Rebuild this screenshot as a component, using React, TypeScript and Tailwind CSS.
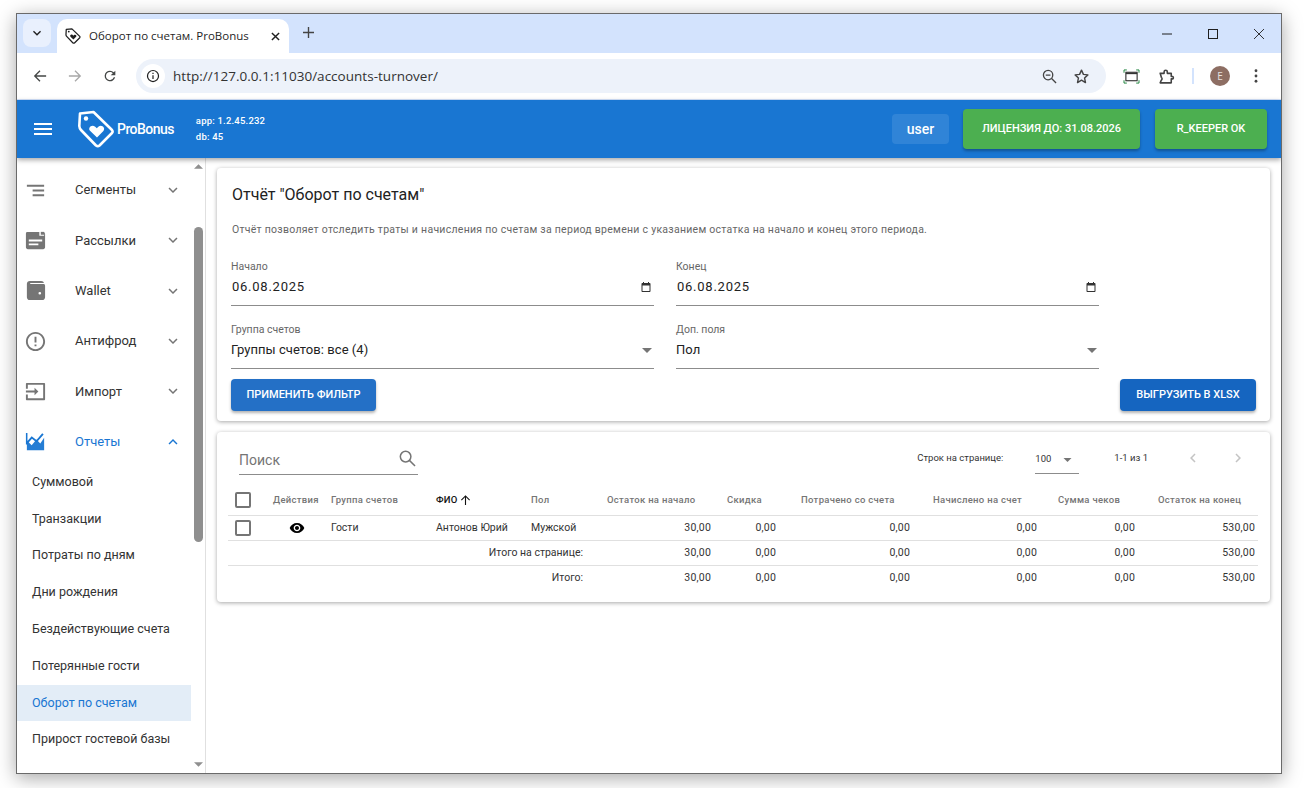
import React from "react";

const P = ({ d, className = "" }: { d: string; className?: string }) => (
  <svg viewBox="0 0 24 24" className={className} fill="currentColor"><path d={d} /></svg>
);
const MORE = "M16.59 8.59L12 13.17 7.41 8.59 6 10l6 6 6-6z";
const LESS = "M12 8l-6 6 1.41 1.41L12 10.83l4.59 4.58L18 14z";

const Tag = ({ className = "", sw = 2 }: { className?: string; sw?: number }) => (
  <svg viewBox="0 0 38 38" className={className} fill="none" stroke="currentColor" strokeWidth={sw} strokeLinejoin="round">
    <path d="M3 3.5 L16.5 2 L35 20 Q36.2 21.5 35 23 L22.5 35.5 Q20.8 36.8 19 35.5 L4 20 Q2.5 18.5 2.3 16 Z" />
    <circle cx="9" cy="8.5" r="2.2" fill="currentColor" stroke="none" />
    <path d="M20 27.5 L13 20.8 C10.5 17.8 14.8 13.6 18.2 16.8 L19.8 18.3 L21.3 16.8 C24.5 13.8 29 17.8 26.4 20.9 Z" fill="currentColor" stroke="none" />
  </svg>
);

const navTop = [
  { label: "Сегменты", icon: <P d="M9 18h12v-2H9v2zM3 6v2h18V6H3zm6 7h12v-2H9v2z" className="w-[23px] h-[23px]" /> },
  {
    label: "Рассылки",
    icon: (
      <svg viewBox="0 0 24 24" className="w-[23px] h-[23px]" fill="currentColor">
        <path fillRule="evenodd" d="M3 3h13v4h5V3.5c.6.2 1 .7 1 1.5v14c0 1.1-.9 2-2 2H4c-1.1 0-2-.9-2-2V5c0-1.1.4-2 1-2zM5 11v2h14v-2H5zm0 4v2h10v-2H5z" />
        <rect x="17.5" y="3" width="3.5" height="3" />
      </svg>
    ),
  },
  {
    label: "Wallet",
    icon: (
      <svg viewBox="0 0 24 24" className="w-[23px] h-[23px]" fill="currentColor">
        <path fillRule="evenodd" d="M6 2h12c1.5 0 2.5 1 2.8 2.2H6.5v1H21c.6.3 1 1 1 1.8v12c0 1.6-1.2 3-3 3H6c-1.8 0-3-1.4-3-3V5c0-1.7 1.3-3 3-3zm10.5 11.5a1.4 1.4 0 1 0 0 2.8 1.4 1.4 0 0 0 0-2.8z" />
      </svg>
    ),
  },
  { label: "Антифрод", icon: <P d="M11 15h2v2h-2zm0-8h2v6h-2zm.99-5C6.47 2 2 6.48 2 12s4.47 10 9.99 10C17.52 22 22 17.52 22 12S17.52 2 11.99 2zM12 20c-4.42 0-8-3.58-8-8s3.58-8 8-8 8 3.58 8 8-3.58 8-8 8z" className="w-[23px] h-[23px]" /> },
  { label: "Импорт", icon: <P d="M21 3.01H3c-.5 0-1 .4-1 1V9h2V5h16v14H4v-4H2v5c0 .6.5 1 1 1h18c.5 0 1-.4 1-1V4c0-.6-.5-1-1-1zM11 16l4-4-4-4v3H2v2h9v3z" className="w-[23px] h-[23px]" /> },
];
const sub = ["Суммовой", "Транзакции", "Потраты по дням", "Дни рождения", "Бездействующие счета", "Потерянные гости", "Оборот по счетам", "Прирост гостевой базы"];

const Check = () => <span className="block w-[16px] h-[16px] rounded-[2px] border-2 border-[#757575] bg-white" />;

const cols = [34, 69, 105, 95, 65, 118, 65, 134, 127, 98, 120];
const heads: [string, number][] = [
  ["Остаток на начало", 11],
  ["Скидка", 13],
  ["Потрачено со счета", 22],
  ["Начислено на счет", 20],
  ["Сумма чеков", 18],
  ["Остаток на конец", 20],
];
const Nums = ({ first }: { first: string }) => (
  <>
    {[first, "0,00", "0,00", "0,00", "0,00", "530,00"].map((v, i) => (
      <td key={i} className="text-right pr-[3px] tracking-[0.2px]">{v}</td>
    ))}
  </>
);

const Field = ({ label, value, date }: { label: string; value: string; date?: boolean }) => (
  <div className="w-[423px] h-[44px] border-b border-[#8c8c8c] flex flex-col">
    <div className="text-[10.5px] leading-[13px] text-[#666] mt-[-2px]">{label}</div>
    <div className="flex items-center justify-between mt-[4px] h-[20px] text-[13px] text-[#222]">
      <span className={date ? "tracking-[0.75px] pl-[1px]" : "tracking-[0.05px]"}>{value}</span>
      {date ? (
        <P d="M19 4h-1V2h-2v2H8V2H6v2H5c-1.1 0-2 .9-2 2v14c0 1.1.9 2 2 2h14c1.1 0 2-.9 2-2V6c0-1.1-.9-2-2-2zm0 16H5V9h14v11z" className="w-[12px] h-[12px] mr-[2px] text-[#333]" />
      ) : (
        <svg viewBox="0 0 10 5" className="w-[10px] h-[5px] mr-[2px] text-[#757575]" fill="currentColor"><path d="M0 0h10L5 5z" /></svg>
      )}
    </div>
  </div>
);

export default function App() {
  return (
    <div className="w-[1305px] h-[788px] bg-white overflow-hidden pl-[16px] pt-[13px] font-['Roboto',sans-serif]">
      <div className="w-[1266px] h-[761px] border border-[#6a6a6a] shadow-[0_4px_18px_rgba(0,0,0,0.35)] bg-white flex flex-col overflow-hidden">
        {/* tab strip */}
        <div className="h-[39px] shrink-0 bg-[#d3e3fd] flex items-end font-['Open_Sans',sans-serif]">
          <div className="ml-[6px] mb-[6px] w-[28px] h-[28px] rounded-[8px] bg-[#e9f0fd] flex items-center justify-center text-[#1f1f1f]">
            <P d={MORE} className="w-[16px] h-[16px]" />
          </div>
          <div className="ml-[6px] w-[232px] h-[34px] bg-white rounded-t-[10px] flex items-center pl-[8px] pr-[9px] text-[#1f1f1f]">
            <Tag className="w-[16px] h-[16px] shrink-0" sw={3} />
            <span className="ml-[8px] text-[11.5px] leading-none flex-1 whitespace-nowrap">Оборот по счетам. ProBonus</span>
            <svg viewBox="0 0 10 10" className="w-[9px] h-[9px]" stroke="currentColor" strokeWidth="1.6"><path d="M1 1l8 8M9 1l-8 8" /></svg>
          </div>
          <svg viewBox="0 0 12 12" className="w-[11px] h-[11px] ml-[14px] mb-[15px] text-[#444]" stroke="currentColor" strokeWidth="1.5"><path d="M6 0v12M0 6h12" /></svg>
          <div className="ml-auto flex items-center mb-[14px] mr-[17px] gap-[36px] text-[#1f1f1f]">
            <svg viewBox="0 0 10 10" className="w-[10px] h-[10px]" stroke="currentColor" strokeWidth="1"><path d="M0 5h10" /></svg>
            <svg viewBox="0 0 10 10" className="w-[10px] h-[10px]" fill="none" stroke="currentColor" strokeWidth="1"><rect x=".5" y=".5" width="9" height="9" /></svg>
            <svg viewBox="0 0 10 10" className="w-[10px] h-[10px]" stroke="currentColor" strokeWidth=".9"><path d="M0 0l10 10M10 0L0 10" /></svg>
          </div>
        </div>
        {/* toolbar */}
        <div className="h-[47px] shrink-0 bg-white flex items-center border-b border-[#d3e3fd] text-[#444746] font-['Open_Sans',sans-serif]">
          <svg viewBox="0 0 16 16" className="w-[14px] h-[14px] ml-[16px]" fill="none" stroke="currentColor" strokeWidth="1.5"><path d="M15 8H2M8 2L2 8l6 6" /></svg>
          <svg viewBox="0 0 16 16" className="w-[14px] h-[14px] ml-[21px] text-[#a8a8a8]" fill="none" stroke="currentColor" strokeWidth="1.5"><path d="M1 8h13M8 2l6 6-6 6" /></svg>
          <svg viewBox="0 0 24 24" className="w-[16px] h-[16px] ml-[20px]" fill="currentColor"><path d="M17.65 6.35A7.96 7.96 0 0 0 12 4a8 8 0 1 0 7.73 10h-2.08A6 6 0 1 1 12 6c1.66 0 3.14.69 4.22 1.78L13 11h7V4l-2.35 2.35z" /></svg>
          <div className="ml-[18px] w-[970px] h-[34px] rounded-full bg-[#edf2fa] flex items-center pl-[5px] pr-[16px]">
            <span className="w-[24px] h-[24px] rounded-full bg-white flex items-center justify-center">
              <svg viewBox="0 0 16 16" className="w-[14px] h-[14px]" fill="none" stroke="#1f1f1f" strokeWidth="1.4"><circle cx="8" cy="8" r="6.3" /><path d="M8 7v4.5M8 4.2v1.6" /></svg>
            </span>
            <span className="ml-[8px] text-[13.5px] text-[#333] tracking-[0.02px] whitespace-nowrap">http://127.0.0.1:11030/accounts-turnover/</span>
            <svg viewBox="0 0 16 16" className="w-[15px] h-[15px] ml-auto" fill="none" stroke="#444" strokeWidth="1.4"><circle cx="6.5" cy="6.5" r="5" /><path d="M10.2 10.2L15 15M4 6.5h5" /></svg>
            <svg viewBox="0 0 24 24" className="w-[17px] h-[17px] ml-[16px]" fill="none" stroke="#444" strokeWidth="2" strokeLinejoin="round"><path d="M12 3l2.7 6 6.3.7-4.7 4.3 1.3 6.5-5.6-3.3-5.6 3.3L7.7 14 3 9.7 9.3 9z" /></svg>
          </div>
          <svg viewBox="0 0 18 16" className="w-[17px] h-[15px] ml-[17px]" fill="none">
            <path d="M1 4V1h3M14 1h3v3M17 12v3h-3M4 15H1v-3" stroke="#188038" strokeWidth="1" />
            <rect x="3" y="3.5" width="12" height="9" stroke="#333" strokeWidth="1.2" />
            <path d="M3 4h12v1.5H3z" fill="#333" />
          </svg>
          <svg viewBox="0 0 24 24" className="w-[19px] h-[19px] ml-[17px]" fill="none" stroke="#444" strokeWidth="2" strokeLinejoin="round"><path d="M4 8h5V6a2 2 0 0 1 4 0v2h5v4h2a2 2 0 0 1 0 3h-2v5H4l1.5-3.5a2.2 2.2 0 0 0 0-3.5L4 8z" /></svg>
          <span className="w-[2px] h-[16px] bg-[#d3e3fd] ml-[16px]" />
          <span className="ml-[16px] w-[20px] h-[20px] rounded-full bg-[#8d6e63] text-white/80 text-[10px] flex items-center justify-center">E</span>
          <svg viewBox="0 0 4 16" className="w-[4px] h-[14px] ml-[24px]" fill="#444"><circle cx="2" cy="2" r="1.6" /><circle cx="2" cy="8" r="1.6" /><circle cx="2" cy="14" r="1.6" /></svg>
        </div>
        {/* app bar */}
        <div className="h-[58px] shrink-0 bg-[#1976d2] text-white flex items-center shadow-[0_2px_5px_rgba(0,0,0,0.35)] relative z-10">
          <P d="M3 18h18v-2H3v2zm0-5h18v-2H3v2zm0-7v2h18V6H3z" className="w-[24px] h-[24px] ml-[14px]" />
          <Tag className="w-[38px] h-[38px] ml-[22px]" sw={2.6} />
          <span className="ml-[2px] text-[14px] font-medium tracking-[-0.55px]">ProBonus</span>
          <div className="ml-[22px] text-[9.5px] font-medium leading-[16px] tracking-[0.2px]">
            <div>app: 1.2.45.232</div>
            <div>db: 45</div>
          </div>
          <div className="ml-auto w-[57px] h-[30px] rounded-[4px] bg-white/10 flex items-center justify-center text-[14px] font-medium">user</div>
          <div className="ml-[14px] w-[177px] h-[40px] rounded-[4px] bg-[#4caf50] shadow-[0_2px_3px_rgba(0,0,0,0.3)] flex items-center justify-center text-[11px] font-medium">ЛИЦЕНЗИЯ ДО: 31.08.2026</div>
          <div className="ml-[15px] mr-[14px] w-[112px] h-[40px] rounded-[4px] bg-[#4caf50] shadow-[0_2px_3px_rgba(0,0,0,0.3)] flex items-center justify-center text-[11px] font-medium">R_KEEPER OK</div>
        </div>
        {/* body */}
        <div className="flex-1 flex min-h-0">
          <aside className="w-[189px] shrink-0 flex border-r border-[#e0e0e0]">
            <div className="w-[174px] shrink-0 pt-[7px] overflow-hidden text-[13px] text-[#333]">
              {navTop.map((n) => (
                <div key={n.label} className="h-[50.3px] flex items-center">
                  <span className="w-[58px] pl-[7px] text-[#757575] flex">{n.icon}</span>
                  <span className="flex-1">{n.label}</span>
                  <P d={MORE} className="w-[18px] h-[18px] mr-[9px] text-[#757575]" />
                </div>
              ))}
              <div className="h-[50.3px] flex items-center text-[#1976d2]">
                <span className="w-[58px] pl-[7px] flex">
                  <svg viewBox="0 0 24 24" className="w-[23px] h-[23px]" fill="currentColor">
                    <path d="M3 21V11l5 5 5-6 4 4 4-6v13H3z" opacity=".95" />
                    <path d="M2 15V3h1.6v8.5L8 6.5l5 4 6-7 1.5 1.2L13.2 13 8.3 9 3 15z" />
                  </svg>
                </span>
                <span className="flex-1">Отчеты</span>
                <P d={LESS} className="w-[18px] h-[18px] mr-[9px]" />
              </div>
              <div className="mt-[-3px]">
                {sub.map((s) => (
                  <div key={s} className={"h-[36.8px] flex items-center pl-[15px] text-[12.5px] " + (s === "Оборот по счетам" ? "bg-[#e3edf7] text-[#1976d2]" : "")}>{s}</div>
                ))}
              </div>
            </div>
            <div className="w-[14px] shrink-0 flex flex-col items-center bg-white">
              <svg viewBox="0 0 10 5" className="w-[9px] h-[5px] mt-[6px] text-[#8f8f8f]" fill="currentColor"><path d="M5 0l5 5H0z" /></svg>
              <span className="w-[9px] h-[315px] rounded-full bg-[#8f8f8f] mt-[58px]" />
              <svg viewBox="0 0 10 5" className="w-[9px] h-[5px] mt-auto mb-[6px] text-[#8f8f8f]" fill="currentColor"><path d="M0 0h10L5 5z" /></svg>
            </div>
          </aside>
          <main className="flex-1 min-w-0 pl-[11px] pr-[11px] pt-[10px]">
            <section className="h-[253px] rounded-[4px] bg-white shadow-[0_1px_4px_rgba(0,0,0,0.35)] px-[14px] pt-[17px]">
              <h1 className="text-[16px] leading-[20px] text-[#222] pl-[1px]">Отчёт "Оборот по счетам"</h1>
              <p className="mt-[18px] text-[10.5px] leading-[14px] text-[#666] pl-[1px] tracking-[0.27px]">Отчёт позволяет отследить траты и начисления по счетам за период времени с указанием остатка на начало и конец этого периода.</p>
              <div className="mt-[25px] flex gap-[22px]">
                <Field label="Начало" value="06.08.2025" date />
                <Field label="Конец" value="06.08.2025" date />
              </div>
              <div className="mt-[19px] flex gap-[22px]">
                <Field label="Группа счетов" value="Группы счетов: все (4)" />
                <Field label="Доп. поля" value="Пол" />
              </div>
              <div className="mt-[10px] flex justify-between">
                <button className="w-[145px] h-[32px] rounded-[4px] bg-[#2470c6] text-white text-[11px] font-medium shadow-[0_2px_3px_rgba(0,0,0,0.3)]">ПРИМЕНИТЬ ФИЛЬТР</button>
                <button className="w-[136px] h-[32px] rounded-[4px] bg-[#1565c0] text-white text-[11px] font-medium shadow-[0_2px_3px_rgba(0,0,0,0.3)]">ВЫГРУЗИТЬ В XLSX</button>
              </div>
            </section>
            <section className="mt-[11px] h-[170px] rounded-[4px] bg-white shadow-[0_1px_4px_rgba(0,0,0,0.35)] px-[11px]">
              <div className="h-[54px] flex items-start text-[#333]">
                <div className="ml-[11px] mt-[14px] w-[179px] h-[29px] border-b border-[#8c8c8c] flex items-center justify-between">
                  <span className="text-[14px] text-[#757575]">Поиск</span>
                  <svg viewBox="0 0 18 18" className="w-[17px] h-[17px] mr-[2px] mt-[-4px]" fill="none" stroke="#757575" strokeWidth="1.6"><circle cx="7" cy="7" r="5.6" /><path d="M11 11l6 6" /></svg>
                </div>
                <span className="ml-auto mt-[20px] text-[9.5px] leading-[12px]">Строк на странице:</span>
                <div className="ml-[32px] mt-[14px] w-[44px] h-[28px] border-b border-[#8c8c8c] flex items-center justify-between text-[9.5px]">
                  <span>100</span>
                  <svg viewBox="0 0 10 5" className="w-[9px] h-[4px] text-[#757575] mr-[7px]" fill="currentColor"><path d="M0 0h10L5 5z" /></svg>
                </div>
                <span className="ml-[35px] mt-[20px] text-[9.5px] leading-[12px]">1-1 из 1</span>
                <P d="M15.41 7.41L14 6l-6 6 6 6 1.41-1.41L10.83 12z" className="w-[18px] h-[18px] ml-[36px] mt-[17px] text-[#c4c4c4]" />
                <P d="M10 6L8.59 7.41 13.17 12l-4.58 4.59L10 18l6-6z" className="w-[18px] h-[18px] ml-[27px] mt-[17px] mr-[12px] text-[#c4c4c4]" />
              </div>
              <table className="w-[1030px] table-fixed border-collapse text-[10.5px] text-[#333]">
                <colgroup>
                  {cols.map((w, i) => <col key={i} style={{ width: w }} />)}
                </colgroup>
                <thead>
                  <tr className="h-[29px] border-b border-[#e0e0e0] text-[#757575] text-[9.5px] font-medium tracking-[0.3px] text-left">
                    <th className="pl-[7px] font-medium"><Check /></th>
                    <th className="pl-[11px] font-medium whitespace-nowrap">Действия</th>
                    <th className="font-medium whitespace-nowrap">Группа счетов</th>
                    <th className="font-medium text-[#111] whitespace-nowrap">
                      <span className="inline-flex items-center">ФИО
                        <svg viewBox="0 0 12 12" className="w-[11px] h-[11px] ml-[2px]" fill="none" stroke="currentColor" strokeWidth="1.2"><path d="M6 11V1M1.5 5.5L6 1l4.5 4.5" /></svg>
                      </span>
                    </th>
                    <th className="font-medium">Пол</th>
                    {heads.map(([h, p]) => (
                      <th key={h} className="font-medium whitespace-nowrap" style={{ paddingLeft: p }}>{h}</th>
                    ))}
                  </tr>
                </thead>
                <tbody>
                  <tr className="h-[25px] border-b border-[#e0e0e0]">
                    <td className="pl-[7px]"><Check /></td>
                    <td><P d="M12 4.5C7 4.5 2.73 7.61 1 12c1.73 4.39 6 7.5 11 7.5s9.27-3.11 11-7.5c-1.73-4.39-6-7.5-11-7.5zM12 17c-2.76 0-5-2.24-5-5s2.24-5 5-5 5 2.24 5 5-2.24 5-5 5zm0-8c-1.66 0-3 1.34-3 3s1.34 3 3 3 3-1.34 3-3-1.34-3-3-3z" className="w-[16px] h-[16px] mx-auto text-black" /></td>
                    <td>Гости</td>
                    <td className="whitespace-nowrap">Антонов Юрий</td>
                    <td>Мужской</td>
                    <Nums first="30,00" />
                  </tr>
                  <tr className="h-[25px] border-b border-[#e0e0e0]">
                    <td colSpan={5} className="text-right pr-[13px]">Итого на странице:</td>
                    <Nums first="30,00" />
                  </tr>
                  <tr className="h-[25px]">
                    <td colSpan={5} className="text-right pr-[13px]">Итого:</td>
                    <Nums first="30,00" />
                  </tr>
                </tbody>
              </table>
            </section>
          </main>
        </div>
      </div>
    </div>
  );
}
